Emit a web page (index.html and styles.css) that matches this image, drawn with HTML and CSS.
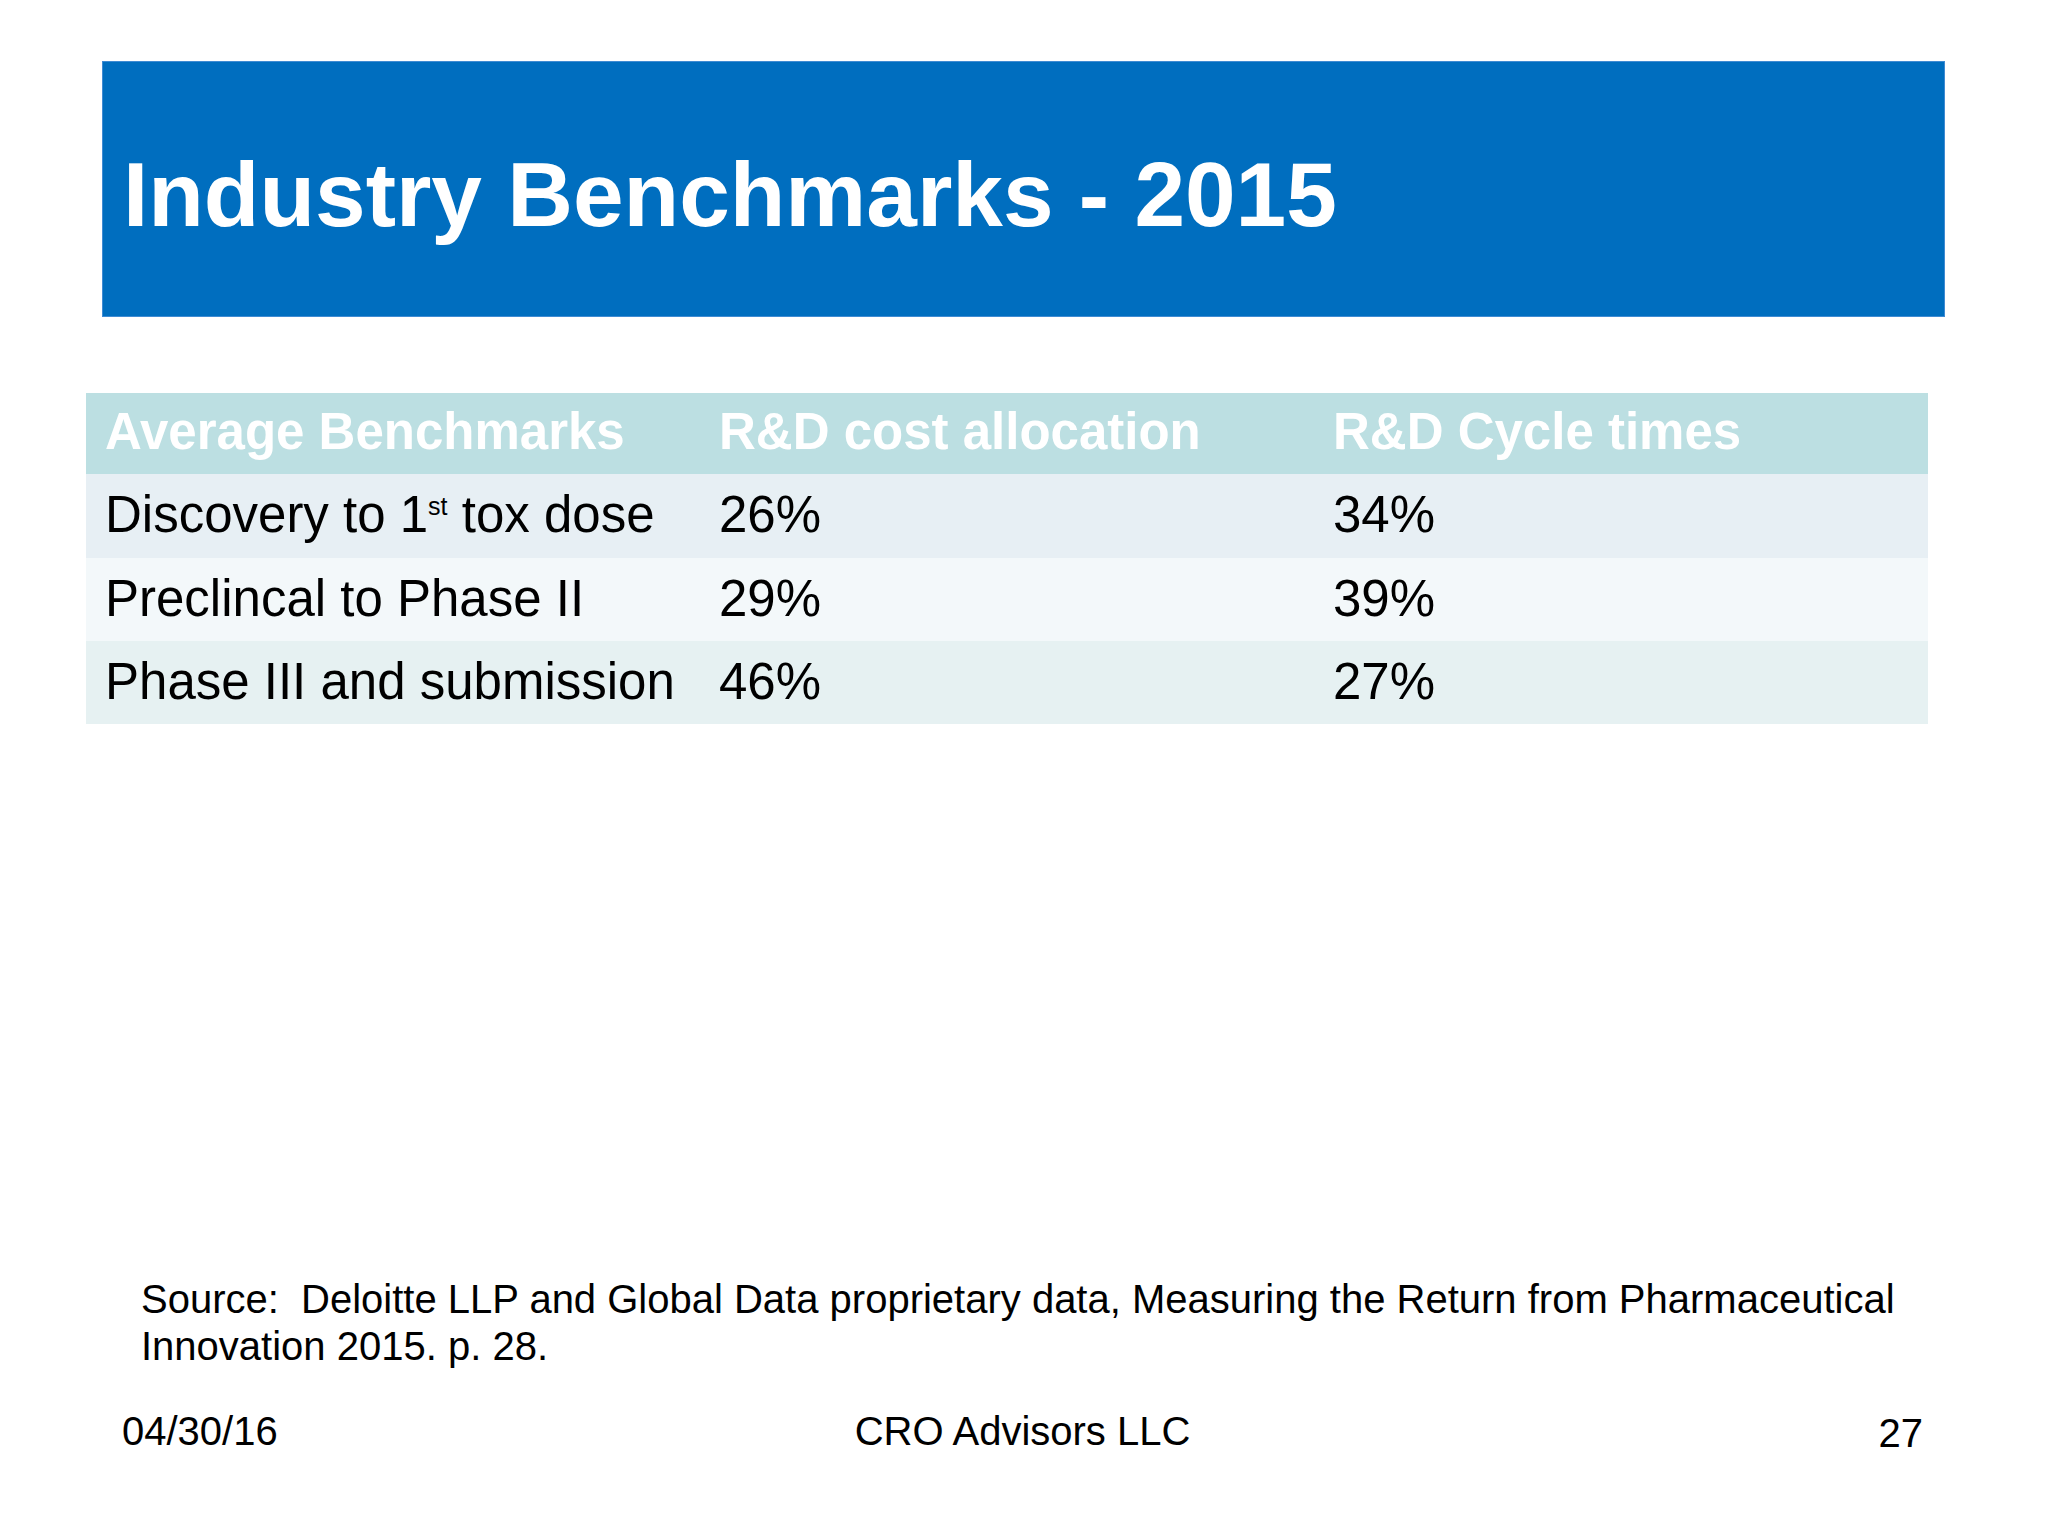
FILE: index.html
```html
<!DOCTYPE html>
<html lang="en">
<head>
<meta charset="utf-8">
<title>Industry Benchmarks - 2015</title>
<link rel="stylesheet" href="styles.css">
</head>
<body>
<div class="slide">
  <header class="title-bar">
    <h1 class="title">Industry Benchmarks - 2015</h1>
  </header>

  <table class="bench">
    <colgroup>
      <col class="col">
      <col class="col">
      <col class="col">
    </colgroup>
    <thead>
      <tr class="head-row">
        <th>Average Benchmarks</th>
        <th>R&amp;D cost allocation</th>
        <th>R&amp;D Cycle times</th>
      </tr>
    </thead>
    <tbody>
      <tr class="row row-a">
        <td>Discovery to 1<sup class="ord">st</sup> tox dose</td>
        <td>26%</td>
        <td>34%</td>
      </tr>
      <tr class="row row-b">
        <td>Preclincal to Phase II</td>
        <td>29%</td>
        <td>39%</td>
      </tr>
      <tr class="row row-c">
        <td>Phase III and submission</td>
        <td>46%</td>
        <td>27%</td>
      </tr>
    </tbody>
  </table>

  <p class="source">Source:&nbsp; Deloitte LLP and Global Data proprietary data, Measuring the Return from Pharmaceutical Innovation 2015. p. 28.</p>

  <footer class="footer">
    <span class="foot-date">04/30/16</span>
    <span class="foot-org">CRO Advisors LLC</span>
    <span class="foot-page">27</span>
  </footer>
</div>
</body>
</html>
```

FILE: styles.css
```css
html, body {
  margin: 0;
  padding: 0;
  background: #ffffff;
}

body {
  font-family: "Liberation Sans", Arial, sans-serif;
  color: #000000;
}

.slide {
  width: 2048px;
  height: 1536px;
  display: flex;
  flex-direction: column;
  overflow: hidden;
}

.title-bar {
  box-sizing: border-box;
  margin: 61px 0 0 102px;
  width: 1843px;
  height: 256px;
  background: #006ebf;
  border: 1px solid #3f8bd3;
  padding: 87px 0 0 20px;
}

.title {
  margin: 0;
  font-size: 91px;
  font-weight: bold;
  line-height: 1;
  color: #ffffff;
  white-space: nowrap;
}

.bench {
  margin: 76px 0 0 86px;
  width: 1842px;
  border-collapse: collapse;
  border-spacing: 0;
  table-layout: fixed;
}

.bench .col {
  width: 614px;
}

.bench th,
.bench td {
  padding: 0 0 0 19px;
  text-align: left;
  vertical-align: top;
  font-size: 51px;
  line-height: 1;
  white-space: nowrap;
}

.head-row {
  height: 81px;
  background: #bcdfe2;
}

.head-row th {
  padding-top: 13px;
  font-weight: bold;
  color: #ffffff;
}

.row td {
  padding-top: 15px;
  font-weight: normal;
  color: #000000;
}

.row-a {
  height: 84px;
  background: #e7eff4;
}

.row-b {
  height: 83px;
  background: #f3f8fa;
}

.row-c {
  height: 83px;
  background: #e6f1f2;
}

.ord {
  font-size: 25px;
  line-height: 0;
  vertical-align: 17px;
}

.source {
  margin: 552px 0 0 141px;
  width: 1787px;
  font-size: 40px;
  line-height: 47px;
}

.footer {
  margin: 41px 0 0 122px;
  width: 1801px;
  display: grid;
  grid-template-columns: 1fr auto 1fr;
  font-size: 40px;
  line-height: 1;
}

.foot-date {
  justify-self: start;
}

.foot-org {
  justify-self: center;
}

.foot-page {
  justify-self: end;
  padding-top: 2px;
}
```
